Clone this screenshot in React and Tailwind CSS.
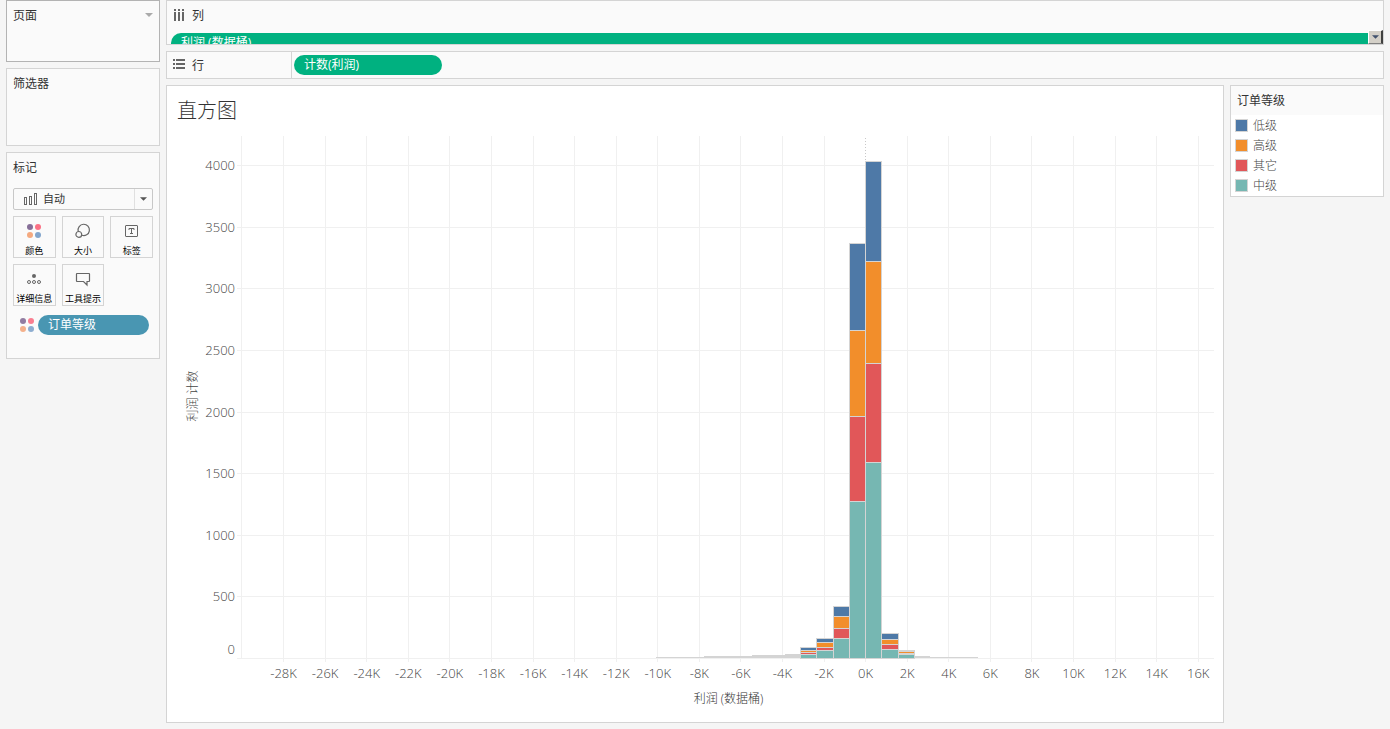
import React, { useState } from "react";

const LEVELS = [
  { key: "low", label: "低级", swatch: "bg-[#4e79a7]", fill: "fill-[#4e79a7]" },
  { key: "high", label: "高级", swatch: "bg-[#f28e2b]", fill: "fill-[#f28e2b]" },
  { key: "other", label: "其它", swatch: "bg-[#e15759]", fill: "fill-[#e15759]" },
  { key: "mid", label: "中级", swatch: "bg-[#76b7b2]", fill: "fill-[#76b7b2]" },
];

// bin = number of bins away from zero profit
const BINS = [
  { bin: -4, mid: 36, other: 12, high: 16, low: 26 },
  { bin: -3, mid: 62, other: 28, high: 41, low: 34 },
  { bin: -2, mid: 160, other: 84, high: 98, low: 82 },
  { bin: -1, mid: 1274, other: 690, high: 698, low: 706 },
  { bin: 0, mid: 1591, other: 804, high: 828, low: 812 },
  { bin: 1, mid: 74, other: 40, high: 42, low: 46 },
  { bin: 2, mid: 34, other: 6, high: 18, low: 6 },
];

// Bins too small to show any colour, drawn as one grey step each
const TAILS = [
  { from: -12.9, to: -9.95, h: 1 },
  { from: -9.95, to: -7, h: 2 },
  { from: -7, to: -5, h: 3 },
  { from: -5, to: -4, h: 4 },
  { from: 3, to: 4, h: 2 },
  { from: 4, to: 6.95, h: 1 },
];

const X_TICKS = Array.from({ length: 23 }, (_, i) => -28 + i * 2);
const Y_TICKS = [0, 500, 1000, 1500, 2000, 2500, 3000, 3500, 4000];
const BIN_SIZE = 0.78;
const X_MIN = -30.24;
const X_SPAN = 47;
const BASE_Y = 522;

const xPct = (v) => `${(((v - X_MIN) / X_SPAN) * 100).toFixed(3)}%`;
const wPct = (v) => `${((v / X_SPAN) * 100).toFixed(3)}%`;
const yPos = (v) => Math.round(BASE_Y - v * 0.1232);

const ColorDots = ({ className }) => (
  <svg viewBox="0 0 14 14" className={className} aria-hidden="true">
    <circle cx="3" cy="3" r="3" fill="#866f98" />
    <circle cx="11" cy="3" r="3" fill="#fb7185" />
    <circle cx="3" cy="11" r="3" fill="#f4a97f" />
    <circle cx="11" cy="11" r="3" fill="#82a5cc" />
  </svg>
);

const SizeIcon = () => (
  <svg viewBox="0 0 16 16" className="w-4 h-4" fill="none" stroke="#666" strokeWidth="1.2" aria-hidden="true">
    <path d="M3.2 8.3A5.7 5.7 0 1 1 6.8 12.3" />
    <circle cx="3.8" cy="11.4" r="2.9" />
  </svg>
);

const LabelIcon = () => (
  <svg viewBox="0 0 16 16" className="w-4 h-4" fill="none" stroke="#666" aria-hidden="true">
    <rect x="1.5" y="2.5" width="12" height="11" rx="0.5" />
    <path d="M5 7V5.5h5V7M7.5 5.5v5M6 10.5h3" />
  </svg>
);

const DetailIcon = () => (
  <svg viewBox="0 0 16 16" className="w-4 h-4" fill="none" stroke="#666" aria-hidden="true">
    <circle cx="8" cy="5" r="2" fill="#666" stroke="none" />
    <circle cx="3" cy="11" r="1.5" />
    <circle cx="8" cy="11" r="1.5" />
    <circle cx="13" cy="11" r="1.5" />
  </svg>
);

const TooltipIcon = () => (
  <svg viewBox="0 0 16 16" className="w-4 h-4" fill="none" stroke="#666" strokeWidth="1.2" aria-hidden="true">
    <path d="M2 2.5h12a.5.5 0 0 1 .5.5v7a.5.5 0 0 1-.5.5h-2V14l-3.5-3.5H2a.5.5 0 0 1-.5-.5V3a.5.5 0 0 1 .5-.5z" />
  </svg>
);

const MARK_BUTTONS = [
  { label: "颜色", icon: <ColorDots className="w-3.5 h-3.5" /> },
  { label: "大小", icon: <SizeIcon /> },
  { label: "标签", icon: <LabelIcon /> },
  { label: "详细信息", icon: <DetailIcon /> },
  { label: "工具提示", icon: <TooltipIcon /> },
];

const Caret = ({ className }) => (
  <svg viewBox="0 0 8 4" className={className} aria-hidden="true">
    <path d="M0 0h8L4 4z" />
  </svg>
);

const MarksCard = () => {
  const [markType, setMarkType] = useState("auto");

  return (
    <section className="border border-[#d4d4d4] bg-[#fafafa] px-1.5 pt-[5px] pb-[23px]">
      <h2 className="leading-5">标记</h2>
      <div className="relative mt-2.5">
        <svg viewBox="0 0 14 14" className="absolute left-2.5 top-1 w-3.5 h-3.5 pointer-events-none" fill="none" stroke="#666" aria-hidden="true">
          <rect x="1.5" y="5.5" width="2" height="7" />
          <rect x="6.5" y="4.5" width="2" height="8" />
          <rect x="11.5" y="1.5" width="2" height="11" />
        </svg>
        <select
          aria-label="标记类型"
          value={markType}
          onChange={(e) => setMarkType(e.target.value)}
          className="block w-full h-[22px] appearance-none rounded-xs border border-[#c8c8c8] pl-[29px] text-[11px] leading-5"
        >
          <option value="auto">自动</option>
        </select>
        <div className="absolute right-px top-px flex h-5 w-[18px] items-center justify-center border-l border-[#e0e0e0] pointer-events-none">
          <Caret className="w-[7px] h-1 fill-[#555]" />
        </div>
      </div>
      <div className="mt-1.5 grid grid-cols-3 gap-1.5">
        {MARK_BUTTONS.map(({ label, icon }) => (
          <button
            key={label}
            type="button"
            className="flex h-[42px] flex-col items-center justify-between border border-[#d4d4d4] pt-1.5 text-[9px] leading-3 whitespace-nowrap text-black"
          >
            <span className="flex h-4 items-center">{icon}</span>
            {label}
          </button>
        ))}
      </div>
      <div className="mt-[9px] flex items-center gap-1 pl-[7px] pr-1">
        <ColorDots className="w-3.5 h-3.5 opacity-90" />
        <button type="button" className="h-5 flex-1 rounded-full bg-[#4996b2] px-2.5 text-left leading-5 text-white">
          订单等级
        </button>
      </div>
    </section>
  );
};

const YAxis = () => (
  <svg className="h-[550px] w-[70px] shrink-0 font-light" role="img" aria-label="利润 计数">
    <text transform="translate(30 260) rotate(-90)" textAnchor="middle" className="fill-[#444] text-[12px]">
      利润 计数
    </text>
    {Y_TICKS.map((v) => (
      <text key={v} x="68" y={v === 0 ? 518 : yPos(v) + 5} textAnchor="end" className="fill-[#444] text-[13px]">
        {v}
      </text>
    ))}
  </svg>
);

const Histogram = () => (
  <svg className="block h-[550px] w-full font-light" role="img" aria-label="直方图" shapeRendering="crispEdges">
    {/* Grid */}
    <g className="stroke-[#f0f0f0]">
      {Y_TICKS.map((v) => (
        <line key={v} x1="0" x2="100%" y1={yPos(v)} y2={yPos(v)} />
      ))}
      <line x1={xPct(-30)} x2={xPct(-30)} y1="0" y2={BASE_Y} />
      {X_TICKS.map((v) => (
        <line key={v} x1={xPct(v)} x2={xPct(v)} y1={v === 0 ? BASE_Y : 0} y2="526" />
      ))}
    </g>
    <line x1={xPct(0)} x2={xPct(0)} y1="2" y2={BASE_Y} strokeDasharray="1 2" className="stroke-[#c8c8c8]" />

    {/* Bars */}
    {TAILS.map(({ from, to, h }) => (
      <rect
        key={from}
        x={xPct(from * BIN_SIZE)}
        width={wPct((to - from) * BIN_SIZE)}
        y={BASE_Y - h}
        height={h}
        className="fill-[#d4d4d4]"
      />
    ))}
    {BINS.map((row) => {
      let total = 0;
      return [...LEVELS].reverse().map(({ key, fill }) => {
        const bottom = yPos(total);
        total += row[key];
        const top = yPos(total);
        return (
          <rect
            key={`${row.bin}-${key}`}
            x={xPct(row.bin * BIN_SIZE)}
            width={wPct(BIN_SIZE)}
            y={top}
            height={bottom - top}
            className={`${fill} stroke-[#d4d4d4]`}
          />
        );
      });
    })}

    {X_TICKS.map((v) => (
      <text key={v} x={xPct(v)} y="542" textAnchor="middle" className="fill-[#444] text-[13px]">
        {v}K
      </text>
    ))}
  </svg>
);

const App = () => {
  return (
    <div className="flex min-h-screen gap-1.5 bg-[#f5f5f5] px-1.5 pb-1.5 font-['Open_Sans','Noto_Sans_CJK_SC',sans-serif] text-[12px] text-[#333]">
      {/* Left cards */}
      <aside className="flex w-[154px] shrink-0 flex-col gap-1.5">
        <section className="flex h-[62px] items-start justify-between border border-[#b3b3b3] bg-[#fafafa] px-1.5 pt-[5px]">
          <h2 className="leading-5">页面</h2>
          <button type="button" aria-label="页面菜单" className="flex h-[18px] items-center">
            <Caret className="w-2 h-1 fill-[#aaa]" />
          </button>
        </section>
        <section className="h-[78px] border border-[#d4d4d4] bg-[#fafafa] px-1.5 pt-[5px]">
          <h2 className="leading-5">筛选器</h2>
        </section>
        <MarksCard />
      </aside>

      <div className="flex min-w-0 flex-1 flex-col gap-1.5">
        {/* Columns shelf */}
        <section className="relative h-[45px] overflow-hidden border border-[#d4d4d4] bg-[#fafafa] pt-1">
          <div className="flex h-5 items-center gap-[7px] pl-1.5">
            <svg viewBox="0 0 12 12" className="w-3 h-3" fill="#666" aria-hidden="true">
              <path d="M1 0h2v2H1zM5 0h2v2H5zM9 0h2v2H9zM1 3h2v9H1zM5 3h2v9H5zM9 3h2v9H9z" />
            </svg>
            <h2 className="leading-5 pt-px">列</h2>
          </div>
          <div className="mt-2 pl-1 pr-[15px]">
            <button type="button" className="block h-5 w-full rounded-l-full bg-[#00b180] px-2.5 text-left leading-5 text-white">
              利润 (数据桶)
            </button>
          </div>
          <button
            type="button"
            aria-label="向下滚动"
            className="absolute bottom-0 right-0 flex h-3.5 w-[15px] items-center justify-center border-t border-l border-r-2 border-b border-t-white border-l-white border-r-[#404040] border-b-[#808080] bg-[#d4d0c8]"
          >
            <Caret className="w-[7px] h-1 fill-[#42526e]" />
          </button>
        </section>

        {/* Rows shelf */}
        <section className="flex h-7 border border-[#d4d4d4] bg-[#fafafa]">
          <div className="flex w-[125px] items-center gap-[7px] border-r border-[#d4d4d4] pl-1.5">
            <svg viewBox="0 0 12 12" className="w-3 h-3" fill="#666" aria-hidden="true">
              <path d="M0 0h2v2H0zM3 0h9v2H3zM0 4h2v2H0zM3 4h9v2H3zM0 8h2v2H0zM3 8h9v2H3z" />
            </svg>
            <h2 className="leading-5 pt-px">行</h2>
          </div>
          <div className="flex items-center pl-0.5">
            <button type="button" className="h-5 w-[148px] rounded-full bg-[#00b180] px-2.5 text-left leading-5 text-white">
              计数(利润)
            </button>
          </div>
        </section>

        <div className="flex flex-1 gap-1.5">
          {/* View */}
          <main className="min-w-0 flex-1 border border-[#d4d4d4] bg-white pr-[9px]">
            <h1 className="h-[50px] pl-2.5 text-[20px] leading-[50px] font-light">直方图</h1>
            <div className="flex">
              <YAxis />
              <div className="min-w-0 flex-1">
                <Histogram />
                <p className="pl-1.5 pt-px text-center leading-6 font-light">利润 (数据桶)</p>
              </div>
            </div>
          </main>

          {/* Legend */}
          <section className="w-[154px] shrink-0 self-start border border-[#d4d4d4] bg-white">
            <h2 className="h-[29px] bg-[#fafafa] pl-1.5 leading-[29px]">订单等级</h2>
            <ul className="pb-px font-light text-[#444]">
              {LEVELS.map(({ key, label, swatch }) => (
                <li key={key} className="flex h-5 items-center gap-[5px] pl-1">
                  <span className={`w-[13px] h-[13px] border border-[#d4d4d4] ${swatch}`} />
                  <span className="pt-0.5">{label}</span>
                </li>
              ))}
            </ul>
          </section>
        </div>
      </div>
    </div>
  );
};

export default App;
